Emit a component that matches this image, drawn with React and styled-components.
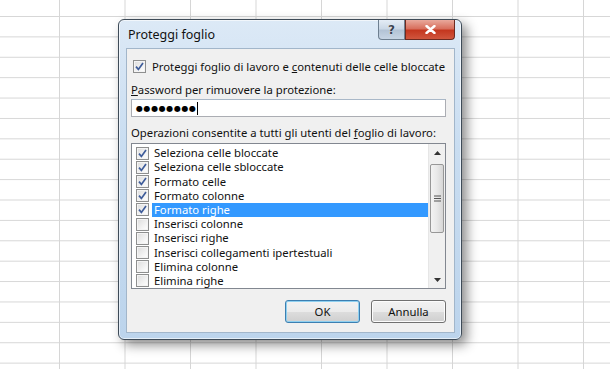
import React from "react";
import styled, { createGlobalStyle } from "styled-components";

const Global = createGlobalStyle`
  html, body { margin: 0; padding: 0; }
  body { font-family: "Noto Sans", "Open Sans", sans-serif; }
`;

const Sheet = styled.div`
  width: 610px;
  height: 369px;
  box-sizing: border-box;
  padding: 19px 0 0 118px;
  background-color: #ffffff;
  background-image:
    linear-gradient(to right, #d6d6d6 1px, transparent 1px),
    linear-gradient(to bottom, #d6d6d6 1px, transparent 1px);
  background-size: 65.5px 100%, 100% 20.4px;
  background-position: 59px 0, 0 16px;
  overflow: hidden;
`;

const Frame = styled.div`
  width: 344px;
  height: 321px;
  box-sizing: border-box;
  border: 1px solid #3e4b58;
  border-radius: 6px;
  background: linear-gradient(to bottom, #dce9f6 0%, #c9ddf1 40%, #bcd4ec 100%);
  box-shadow: 5px 5px 12px rgba(0, 0, 0, 0.45), inset 0 0 0 1px rgba(255,255,255,0.6);
  display: flex;
  flex-direction: column;
  padding: 0 6px 6px 7px;
`;

const TitleBar = styled.div`
  height: 28px;
  display: flex;
  align-items: flex-start;
  justify-content: space-between;
`;

const Title = styled.div`
  font-size: 12.5px;
  color: #111;
  padding: 6px 0 0 2px;
`;

const CaptionButtons = styled.div`
  display: flex;
`;

const CaptionButton = styled.div`
  width: ${(p) => p.$w}px;
  height: 20px;
  box-sizing: border-box;
  display: flex;
  align-items: center;
  justify-content: center;
  border: 1px solid ${(p) => (p.$close ? "#6d2a20" : "#6e7f90")};
  border-top: none;
  border-radius: ${(p) => (p.$close ? "0 0 4px 0" : "0 0 0 4px")};
  background: ${(p) =>
    p.$close
      ? "linear-gradient(to bottom, #e9a99c 0%, #d8705e 45%, #c4371f 55%, #d0563d 100%)"
      : "linear-gradient(to bottom, #e4ecf5 0%, #cbd8e6 45%, #b3c3d5 55%, #c7d5e4 100%)"};
  color: #3a4450;
  font-family: "DejaVu Sans", sans-serif;
  font-weight: bold;
  font-size: 12px;
  text-shadow: 0 0 1px #fff;
`;

const Panel = styled.div`
  flex: 1;
  background: #f0f0f0;
  border: 1px solid #a2b6ca;
  display: flex;
  flex-direction: column;
  padding: 10px 8px 8px 4px;
  font-size: 11.3px;
  color: #111;
  white-space: nowrap;
`;

const CheckRow = styled.label`
  display: flex;
  align-items: center;
  gap: 6px;
  padding-left: 2px;
  height: 15px;
`;

const Box = styled.span`
  width: 13px;
  height: 13px;
  box-sizing: border-box;
  border: 1px solid #8e8f8f;
  background: linear-gradient(135deg, #dcdcdc 0%, #f6f6f6 70%, #ffffff 100%);
  box-shadow: inset 0 0 0 1px #f4f4f4;
  display: inline-flex;
  align-items: center;
  justify-content: center;
  flex: none;
`;

const Check = () => (
  <svg width="9" height="9" viewBox="0 0 9 9">
    <path d="M1 4.6 L3.4 7.4 L8 1" fill="none" stroke="#3e5c9a" strokeWidth="1.7" />
  </svg>
);

const Label = styled.div`
  margin-top: ${(p) => p.$mt}px;
  height: 15px;
  line-height: 15px;
`;

const PasswordBox = styled.div`
  margin-top: 2px;
  height: 18px;
  box-sizing: border-box;
  border: 1px solid #abadb3;
  border-top-color: #a9b8c8;
  background: #fff;
  display: flex;
  align-items: center;
  padding-left: 4px;
`;

const Dots = styled.span`
  font-family: "DejaVu Sans", sans-serif;
  font-size: 8px;
  letter-spacing: 0.6px;
  color: #000;
`;

const Caret = styled.span`
  width: 1px;
  height: 13px;
  background: #000;
`;

const ListBox = styled.div`
  margin-top: 3px;
  height: 146px;
  box-sizing: border-box;
  border: 1px solid #828790;
  background: #fff;
  display: flex;
`;

const Items = styled.div`
  flex: 1;
  padding-top: 2px;
  display: flex;
  flex-direction: column;
`;

const Item = styled.div`
  height: 14.3px;
  display: flex;
  align-items: center;
  padding-left: 4px;
  gap: 3px;
`;

const ItemText = styled.span`
  flex: 1;
  height: 14px;
  line-height: 14px;
  padding-left: 2px;
  background: ${(p) => (p.$sel ? "#3399ff" : "transparent")};
  color: ${(p) => (p.$sel ? "#fff" : "#111")};
`;

const Scrollbar = styled.div`
  width: 17px;
  background: #f0f0f0;
  border-left: 1px solid #e6e6e6;
  display: flex;
  flex-direction: column;
  box-sizing: border-box;
`;

const Arrow = styled.div`
  height: 17px;
  display: flex;
  align-items: center;
  justify-content: center;
`;

const Track = styled.div`
  flex: 1;
  padding-top: 3px;
`;

const Thumb = styled.div`
  margin: 0 1px;
  height: 69px;
  box-sizing: border-box;
  border: 1px solid #979797;
  border-radius: 2px;
  background: linear-gradient(to right, #f3f3f3 0%, #e8e8e8 50%, #d6d6d6 100%);
  display: flex;
  align-items: center;
  justify-content: center;
`;

const Footer = styled.div`
  margin-top: auto;
  display: flex;
  justify-content: flex-end;
  gap: 11px;
  padding-bottom: 1px;
`;

const Button = styled.button`
  width: 75px;
  height: 23px;
  box-sizing: border-box;
  border: 1px solid ${(p) => (p.$default ? "#3c7fb1" : "#707070")};
  border-radius: 3px;
  background: linear-gradient(to bottom, #f2f2f2 0%, #ebebeb 50%, #dddddd 51%, #cfcfcf 100%);
  box-shadow: ${(p) => (p.$default ? "inset 0 0 0 1px #8fd0f0" : "inset 0 0 0 1px #fcfcfc")};
  font-family: "Noto Sans", sans-serif;
  font-size: 11.3px;
  color: #111;
  padding: 0;
`;

const items = [
  ["Seleziona celle bloccate", true],
  ["Seleziona celle sbloccate", true],
  ["Formato celle", true],
  ["Formato colonne", true],
  ["Formato righe", true, true],
  ["Inserisci colonne", false],
  ["Inserisci righe", false],
  ["Inserisci collegamenti ipertestuali", false],
  ["Elimina colonne", false],
  ["Elimina righe", false],
];

export default function App() {
  return (
    <>
      <Global />
      <Sheet>
        <Frame>
          <TitleBar>
            <Title>Proteggi foglio</Title>
            <CaptionButtons>
              <CaptionButton $w={27}>?</CaptionButton>
              <CaptionButton $w={50} $close>
                <svg width="11" height="9" viewBox="0 0 11 9">
                  <path d="M1.5 1 L9.5 8 M9.5 1 L1.5 8" stroke="#fff" strokeWidth="2.4" strokeLinecap="round" />
                </svg>
              </CaptionButton>
            </CaptionButtons>
          </TitleBar>
          <Panel>
            <CheckRow>
              <Box><Check /></Box>
              <span>Proteggi foglio di lavoro e <u>c</u>ontenuti delle celle bloccate</span>
            </CheckRow>
            <Label $mt={8}><u>P</u>assword per rimuovere la protezione:</Label>
            <PasswordBox>
              <Dots>●●●●●●●●</Dots>
              <Caret />
            </PasswordBox>
            <Label $mt={8}>Operazioni consentite a tutti gli utenti del <u>f</u>oglio di lavoro:</Label>
            <ListBox>
              <Items>
                {items.map(([t, c, s]) => (
                  <Item key={t}>
                    <Box>{c && <Check />}</Box>
                    <ItemText $sel={s}>{t}</ItemText>
                  </Item>
                ))}
              </Items>
              <Scrollbar>
                <Arrow>
                  <svg width="7" height="4" viewBox="0 0 7 4"><path d="M0 4 L3.5 0 L7 4 Z" fill="#333" /></svg>
                </Arrow>
                <Track>
                  <Thumb>
                    <svg width="7" height="7" viewBox="0 0 7 7">
                      <path d="M0 1 H7 M0 3.5 H7 M0 6 H7" stroke="#555" strokeWidth="1" />
                    </svg>
                  </Thumb>
                </Track>
                <Arrow>
                  <svg width="7" height="4" viewBox="0 0 7 4"><path d="M0 0 L3.5 4 L7 0 Z" fill="#333" /></svg>
                </Arrow>
              </Scrollbar>
            </ListBox>
            <Footer>
              <Button $default>OK</Button>
              <Button>Annulla</Button>
            </Footer>
          </Panel>
        </Frame>
      </Sheet>
    </>
  );
}
